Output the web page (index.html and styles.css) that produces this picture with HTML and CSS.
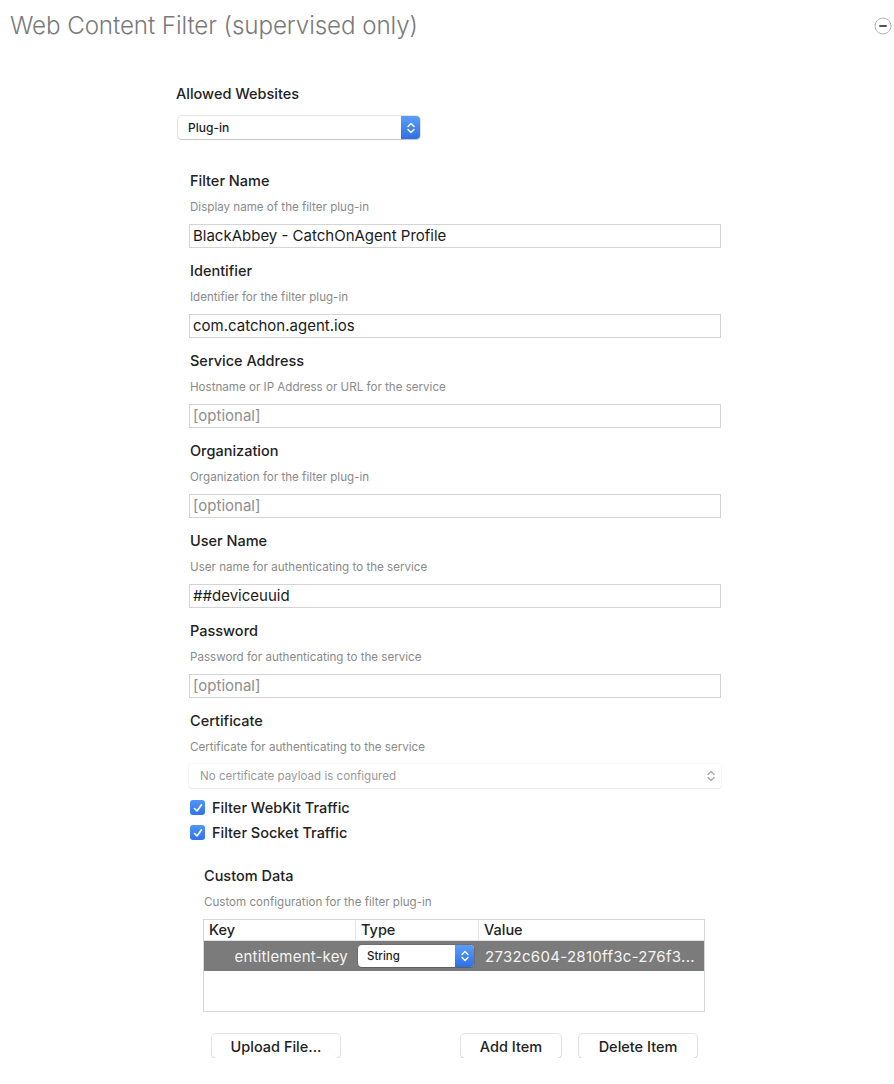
FILE: index.html
```html
<!DOCTYPE html>
<html lang="en">
<head>
  <meta charset="UTF-8">
  <meta name="viewport" content="width=device-width, initial-scale=1.0">
  <title>Web Content Filter</title>
  <link rel="stylesheet" href="styles.css">
</head>
<body>
  <div class="header">
    <h1 class="title">Web Content Filter (supervised only)</h1>
    <svg class="remove-icon" width="18" height="18" viewBox="0 0 18 18">
      <circle cx="9" cy="9" r="8" fill="#fff" stroke="#b5b5b5" stroke-width="1"/>
      <rect x="5" y="8" width="8" height="2" rx="1" fill="#555"/>
    </svg>
  </div>

  <div class="content">
    <div class="top-label">Allowed Websites</div>
    <div class="popup popup-main">
      <span class="popup-text">Plug-in</span>
      <span class="stepper">
        <svg width="10" height="14" viewBox="0 0 10 14"><path d="M2 5.5 L5 2.5 L8 5.5 M2 8.5 L5 11.5 L8 8.5" fill="none" stroke="#fff" stroke-width="1.4" stroke-linecap="round" stroke-linejoin="round"/></svg>
      </span>
    </div>

    <div class="fields">
      <div class="field">
        <div class="field-label">Filter Name</div>
        <div class="field-desc">Display name of the filter plug-in</div>
        <div class="text-input">BlackAbbey - CatchOnAgent Profile</div>
      </div>
      <div class="field">
        <div class="field-label">Identifier</div>
        <div class="field-desc">Identifier for the filter plug-in</div>
        <div class="text-input">com.catchon.agent.ios</div>
      </div>
      <div class="field">
        <div class="field-label">Service Address</div>
        <div class="field-desc">Hostname or IP Address or URL for the service</div>
        <div class="text-input placeholder">[optional]</div>
      </div>
      <div class="field">
        <div class="field-label">Organization</div>
        <div class="field-desc">Organization for the filter plug-in</div>
        <div class="text-input placeholder">[optional]</div>
      </div>
      <div class="field">
        <div class="field-label">User Name</div>
        <div class="field-desc">User name for authenticating to the service</div>
        <div class="text-input">##deviceuuid</div>
      </div>
      <div class="field">
        <div class="field-label">Password</div>
        <div class="field-desc">Password for authenticating to the service</div>
        <div class="text-input placeholder">[optional]</div>
      </div>
      <div class="field">
        <div class="field-label">Certificate</div>
        <div class="field-desc">Certificate for authenticating to the service</div>
        <div class="cert-select">
          <span>No certificate payload is configured</span>
          <svg width="10" height="14" viewBox="0 0 10 14"><path d="M2 5.5 L5 2.5 L8 5.5 M2 8.5 L5 11.5 L8 8.5" fill="none" stroke="#aaa" stroke-width="1.3" stroke-linecap="round" stroke-linejoin="round"/></svg>
        </div>
      </div>

      <div class="checks">
        <label class="check-row"><span class="checkbox"><svg width="12" height="12" viewBox="0 0 12 12"><path d="M2.5 6.5 L5 9 L9.5 2.8" fill="none" stroke="#fff" stroke-width="1.6" stroke-linecap="round" stroke-linejoin="round"/></svg></span>Filter WebKit Traffic</label>
        <label class="check-row"><span class="checkbox"><svg width="12" height="12" viewBox="0 0 12 12"><path d="M2.5 6.5 L5 9 L9.5 2.8" fill="none" stroke="#fff" stroke-width="1.6" stroke-linecap="round" stroke-linejoin="round"/></svg></span>Filter Socket Traffic</label>
      </div>

      <div class="custom">
        <div class="field-label">Custom Data</div>
        <div class="field-desc">Custom configuration for the filter plug-in</div>
        <div class="table">
          <div class="table-head">
            <div class="col-key">Key</div>
            <div class="col-type">Type</div>
            <div class="col-value">Value</div>
          </div>
          <div class="table-row selected">
            <div class="col-key key-cell">entitlement-key</div>
            <div class="col-type">
              <div class="popup popup-small">
                <span class="popup-text">String</span>
                <span class="stepper">
                  <svg width="10" height="14" viewBox="0 0 10 14"><path d="M2 5.5 L5 2.5 L8 5.5 M2 8.5 L5 11.5 L8 8.5" fill="none" stroke="#fff" stroke-width="1.4" stroke-linecap="round" stroke-linejoin="round"/></svg>
                </span>
              </div>
            </div>
            <div class="col-value value-cell">2732c604-2810ff3c-276f3...</div>
          </div>
        </div>
        <div class="buttons">
          <button class="btn btn-upload">Upload File...</button>
          <div class="btn-group">
            <button class="btn btn-add">Add Item</button>
            <button class="btn btn-delete">Delete Item</button>
          </div>
        </div>
      </div>
    </div>
  </div>
</body>
</html>
```

FILE: styles.css
```css
body {
    margin: 0;
    padding: 0;
    background: #fff;
    font-family: 'Inter', 'Helvetica', sans-serif;
    color: #222;
}
.header {
    display: flex;
    justify-content: space-between;
    align-items: center;
    padding: 12px 2px 0 10px;
    height: 28px;
}
.title {
    margin: 0;
    font-size: 24.2px;
    font-weight: 300;
    color: #7a7a7a;
    line-height: 28px;
    letter-spacing: -0.1px;
}
.content {
    margin-left: 176px;
    width: 545px;
    padding-top: 45px;
}
.top-label {
    font-size: 14.5px;
    font-weight: 500;
    line-height: 18px;
    height: 18px;
}
.popup {
    display: flex;
    align-items: center;
    background: #fff;
    border-radius: 4px;
    box-shadow: 0 0 0 1px rgba(0, 0, 0, 0.1), 0 1px 1px rgba(0, 0, 0, 0.15);
    overflow: hidden;
}
.popup-main {
    width: 242px;
    height: 23px;
    margin: 13px 0 0 2px;
}
.popup-text {
    flex: 1;
    font-size: 12px;
    font-weight: 500;
    padding-left: 10px;
    color: #1d1d1d;
}
.stepper {
    width: 19px;
    align-self: stretch;
    display: flex;
    align-items: center;
    justify-content: center;
    background: linear-gradient(#5c9df9, #2f6fe6);
}
.fields {
    margin-left: 13px;
    width: 532px;
    padding-top: 32px;
}
.field {
    margin-bottom: 13px;
}
.field-label {
    font-size: 14.5px;
    font-weight: 500;
    line-height: 20px;
    height: 20px;
    padding-left: 1px;
    color: #222;
}
.field-desc {
    font-size: 11.6px;
    line-height: 16px;
    height: 16px;
    margin-top: 8px;
    padding-left: 1px;
    color: #8a8a8a;
}
.text-input {
    margin-top: 9px;
    height: 24px;
    box-sizing: border-box;
    border: 1px solid #d4d4d4;
    padding: 0 3px;
    font-size: 15px;
    line-height: 22px;
    color: #1a1a1a;
    white-space: nowrap;
}
.text-input.placeholder {
    color: #8e8e8e;
}
.cert-select {
    margin-top: 9px;
    height: 24px;
    display: flex;
    align-items: center;
    justify-content: space-between;
    padding: 0 5px 0 11px;
    font-size: 11.6px;
    color: #999;
    border-radius: 3px;
    box-shadow: 0 0 0 1px rgba(0, 0, 0, 0.03), 0 1px 1px rgba(0, 0, 0, 0.06);
}
.checks {
    margin-top: -6px;
}
.check-row {
    display: flex;
    align-items: center;
    height: 25px;
    font-size: 14.5px;
    font-weight: 500;
    color: #222;
}
.checkbox {
    width: 15px;
    height: 15px;
    border-radius: 3px;
    background: linear-gradient(#4f95f8, #2f74ea);
    display: flex;
    align-items: center;
    justify-content: center;
    margin: 0 7px 0 1px;
}
.custom {
    margin-left: 14px;
    width: 502px;
    padding-top: 21px;
}
.table {
    margin-top: 9px;
    height: 93px;
    box-sizing: border-box;
    border: 1px solid #d6d6d6;
    display: flex;
    flex-direction: column;
}
.table-head {
    display: flex;
    height: 20px;
    border-bottom: 1px solid #e2e2e2;
    font-size: 14.5px;
    font-weight: 500;
    line-height: 20px;
}
.table-head > div {
    padding-left: 5px;
    border-right: 1px solid #e6e6e6;
    box-sizing: border-box;
}
.table-head > div:last-child {
    border-right: none;
}
.col-key {
    width: 152px;
}
.col-type {
    width: 123px;
}
.col-value {
    flex: 1;
}
.table-row {
    display: flex;
    align-items: center;
    height: 30px;
}
.selected {
    background: #7b7b7b;
    color: #f4f4f4;
}
.key-cell {
    text-align: right;
    padding-right: 8px;
    box-sizing: border-box;
    font-size: 15px;
    letter-spacing: 0.2px;
}
.popup-small {
    width: 116px;
    height: 22px;
    margin-left: 2px;
}
.popup-small .popup-text {
    padding-left: 9px;
    font-size: 11.5px;
}
.value-cell {
    font-size: 15px;
    letter-spacing: 0.3px;
    padding-left: 6px;
    white-space: nowrap;
}
.buttons {
    display: flex;
    justify-content: space-between;
    margin-top: 22px;
    padding: 0 8px 0 9px;
}
.btn-group {
    display: flex;
    gap: 18px;
}
.btn {
    height: 24px;
    font-family: 'Inter', 'Helvetica', sans-serif;
    font-size: 14.5px;
    font-weight: 500;
    color: #222;
    background: #fff;
    border: none;
    border-radius: 4px;
    box-shadow: 0 0 0 1px rgba(0, 0, 0, 0.1), 0 1px 1px rgba(0, 0, 0, 0.15);
    padding: 0;
}
.btn-upload {
    width: 128px;
}
.btn-add {
    width: 100px;
}
.btn-delete {
    width: 118px;
}
```
